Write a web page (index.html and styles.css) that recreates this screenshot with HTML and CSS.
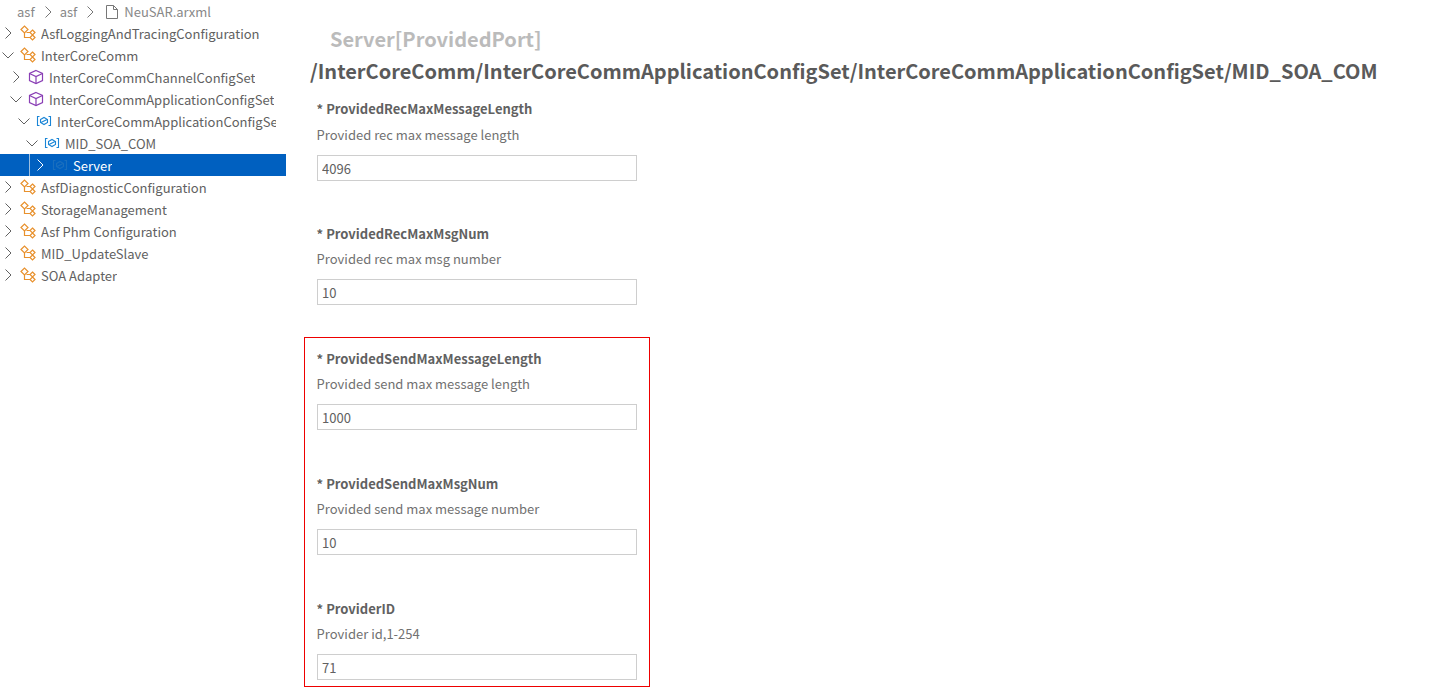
FILE: index.html
```html
<!DOCTYPE html>
<html lang="en">
<head>
<meta charset="utf-8">
<title>NeuSAR.arxml</title>
<link rel="stylesheet" href="styles.css">
</head>
<body>
<svg class="defs" width="0" height="0" aria-hidden="true">
  <defs>
    <symbol id="chev-r" viewBox="0 0 16 16"><path d="M5.500 2.500 11 8l-5.500 5.500" fill="none" stroke="currentColor" stroke-width="1"/></symbol>
    <symbol id="chev-d" viewBox="0 0 16 16"><path d="M2.500 5.500 8 11l5.500-5.500" fill="none" stroke="currentColor" stroke-width="1"/></symbol>
    <symbol id="tree" viewBox="0 0 16 16"><g fill="none" stroke="#e8912d" stroke-width="1.200"><path d="M1 4.500 4.500 1 8 4.500 4.500 8z"/><path d="M12.500 5 15 7.500 12.500 10 10 7.500z"/><path d="M12.500 10 15 12.500 12.500 15 10 12.500z"/><path d="M4.500 8v4.500H10M6.500 7.500H10"/></g></symbol>
    <symbol id="cube" viewBox="0 0 16 16"><g fill="none" stroke="#8a3fb5" stroke-width="1.200"><path d="M8 1.500 14.500 4.500v7L8 14.500 1.500 11.500v-7z"/><path d="M1.500 4.500 8 7.500l6.500-3M8 7.500v7"/></g></symbol>
    <symbol id="param" viewBox="0 0 16 16"><g fill="none" stroke="currentColor" stroke-width="1.100"><path d="M3.500 3.500H1.500v9h2M12.500 3.500h2v9h-2"/><path d="M4.500 6.500 8 4.500l3.500 2v3L8 11.500l-3.500-2z"/><path d="M5 9.500 11 6.500"/></g></symbol>
    <symbol id="file" viewBox="0 0 16 16"><path d="M2.500 1.500h7l4 4v9h-11z M9.500 1.500v4h4" fill="none" stroke="#777" stroke-width="1"/></symbol>
  </defs>
</svg>
<div class="page">
  <aside class="side">
    <nav class="crumbs">
      <span>asf</span><svg class="crumb-sep"><use href="#chev-r"/></svg>
      <span>asf</span><svg class="crumb-sep"><use href="#chev-r"/></svg>
      <svg class="crumb-file"><use href="#file"/></svg><span>NeuSAR.arxml</span>
    </nav>
    <ul class="tree">
      <li class="row"><svg class="tw"><use href="#chev-r"/></svg><svg class="ic"><use href="#tree"/></svg><span>AsfLoggingAndTracingConfiguration</span></li>
      <li class="row"><svg class="tw"><use href="#chev-d"/></svg><svg class="ic"><use href="#tree"/></svg><span>InterCoreComm</span></li>
      <li class="row l1"><svg class="tw"><use href="#chev-r"/></svg><svg class="ic"><use href="#cube"/></svg><span>InterCoreCommChannelConfigSet</span></li>
      <li class="row l1"><svg class="tw"><use href="#chev-d"/></svg><svg class="ic"><use href="#cube"/></svg><span>InterCoreCommApplicationConfigSet</span></li>
      <li class="row l2"><svg class="tw"><use href="#chev-d"/></svg><svg class="ic blue"><use href="#param"/></svg><span>InterCoreCommApplicationConfigSet</span></li>
      <li class="row l3"><svg class="tw"><use href="#chev-d"/></svg><svg class="ic blue"><use href="#param"/></svg><span>MID_SOA_COM</span></li>
      <li class="row l4 sel"><i class="guide"></i><svg class="tw"><use href="#chev-r"/></svg><svg class="ic dim"><use href="#param"/></svg><span>Server</span></li>
      <li class="row"><svg class="tw"><use href="#chev-r"/></svg><svg class="ic"><use href="#tree"/></svg><span>AsfDiagnosticConfiguration</span></li>
      <li class="row"><svg class="tw"><use href="#chev-r"/></svg><svg class="ic"><use href="#tree"/></svg><span>StorageManagement</span></li>
      <li class="row"><svg class="tw"><use href="#chev-r"/></svg><svg class="ic"><use href="#tree"/></svg><span>Asf Phm Configuration</span></li>
      <li class="row"><svg class="tw"><use href="#chev-r"/></svg><svg class="ic"><use href="#tree"/></svg><span>MID_UpdateSlave</span></li>
      <li class="row"><svg class="tw"><use href="#chev-r"/></svg><svg class="ic"><use href="#tree"/></svg><span>SOA Adapter</span></li>
    </ul>
  </aside>
  <main class="main">
    <h1 class="type">Server[ProvidedPort]</h1>
    <h2 class="path">/InterCoreComm/InterCoreCommApplicationConfigSet/InterCoreCommApplicationConfigSet/MID_SOA_COM</h2>
    <section class="plain">
      <div class="field"><div class="lbl">* ProvidedRecMaxMessageLength</div><div class="desc">Provided rec max message length</div><input class="inp" value="4096"></div>
      <div class="field"><div class="lbl">* ProvidedRecMaxMsgNum</div><div class="desc">Provided rec max msg number</div><input class="inp" value="10"></div>
    </section>
    <section class="boxed">
      <div class="field"><div class="lbl">* ProvidedSendMaxMessageLength</div><div class="desc">Provided send max message length</div><input class="inp" value="1000"></div>
      <div class="field"><div class="lbl">* ProvidedSendMaxMsgNum</div><div class="desc">Provided send max message number</div><input class="inp" value="10"></div>
      <div class="field"><div class="lbl">* ProviderID</div><div class="desc">Provider id,1-254</div><input class="inp" value="71"></div>
    </section>
  </main>
</div>
</body>
</html>
```
FILE: styles.css
```css
* { box-sizing: border-box; }
html, body { margin: 0; height: 100%; overflow: hidden; background: #fff; }
body { font-family: "Noto Sans CJK SC", "Noto Sans", sans-serif; font-size: 13px; color: #616161; }
.defs { display: block; height: 0; }
.page { display: flex; height: 700px; }
.side { width: 286px; flex: none; overflow: hidden; }
.crumbs { height: 23px; margin-bottom: -1px; display: flex; align-items: center; padding-left: 17px; color: #888; line-height: 22px; }
.crumb-sep { width: 16px; height: 16px; margin: 0 4px 0 5px; color: #777; }
.crumb-file { width: 16px; height: 16px; margin-right: 4px; margin-left: 2px; }
.tree { list-style: none; margin: 0; padding: 0; }
.row { position: relative; height: 22px; display: flex; align-items: center; white-space: nowrap; padding-left: 0; padding-right: 10px; color: #616161; }
.row span { margin-left: 5px; min-width: 0; overflow: hidden; }
.l1 { padding-left: 8px; }
.l2 { padding-left: 16px; }
.l3 { padding-left: 24px; }
.l4 { padding-left: 32px; }
.tw { width: 16px; height: 16px; flex: none; color: #616161; margin-right: 2px; }
.ic { width: 16px; height: 16px; flex: none; margin-left: 2px; }
.blue { color: #1a85d6; }
.sel { background: #0060c0; color: #fff; }
.sel .tw { color: #fff; }
.dim { color: #1a6fbe; }
.sel span { color: #fff; }
.guide { position: absolute; left: 29px; top: 0; bottom: 0; width: 1px; background: #9dbfe0; }
.main { flex: 1; min-width: 0; padding: 23px 0 0 24px; }
.type { margin: 0 0 0 20px; font-size: 20px; line-height: 32px; font-weight: 700; color: #bbb; }
.path { margin: 0; font-size: 20px; line-height: 32px; font-weight: 700; color: #5a5a5a; white-space: nowrap; }
.plain { padding: 10.4px 0 0 7px; }
.plain .field { height: 124.4px; }
.plain .desc { margin-top: 3.6px; }
.boxed { margin: 32px 0 0 -6px; width: 346px; border: 1px solid #e00; padding: 9px 12px 6px; }
.boxed .field { height: 125px; }
.plain .field:last-child { height: 83.2px; }
.boxed .field:last-child { height: 83px; }
.lbl { margin-left: -0.4px; font-size: 13px; font-weight: 700; line-height: 23px; color: #616161; }
.desc { margin: 3.4px 0 0 -0.4px; line-height: 21px; color: #717171; }
.inp { display: block; margin-top: 9.6px; width: 320px; height: 26px; border: 1px solid #cecece; padding: 2px 4px 0; font: inherit; color: #616161; background: #fff; outline: none; border-radius: 0; }
```
